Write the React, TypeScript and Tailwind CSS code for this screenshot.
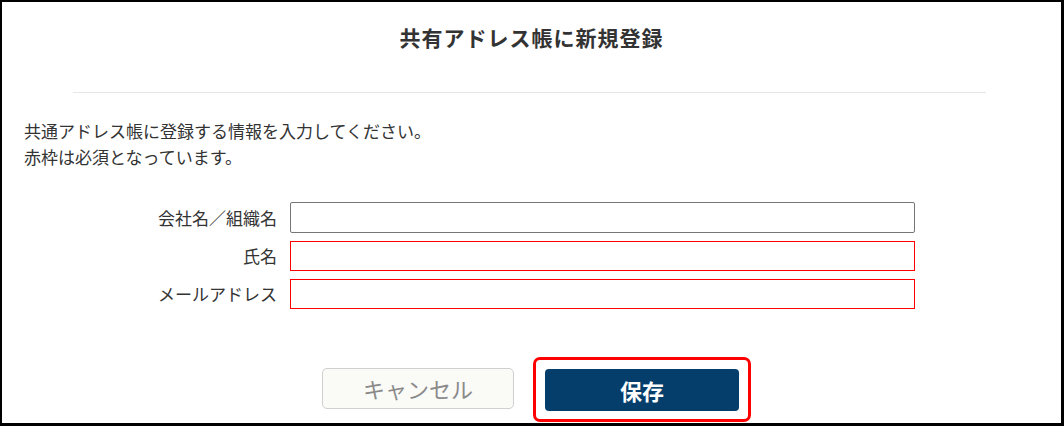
export default function App() {
  return (
    <div className="w-[1064px] h-[426px] overflow-hidden bg-white border-black border-t-2 border-l-2 border-r-[3px] border-b-[3px] text-[#333] font-['Noto_Sans_CJK_JP','Noto_Sans',sans-serif]">
      {/* Title */}
      <h1 className="pt-[20px] text-center text-[21px] leading-[30px] font-bold tracking-[1px]">
        共有アドレス帳に新規登録
      </h1>
      <div className="mt-[40px] ml-[71px] mr-[75px] h-px bg-[#e6e6e6]" />

      {/* Description */}
      <div className="mt-[25px] px-[22px] text-[17px] leading-[26px]">
        <p>共通アドレス帳に登録する情報を入力してください。</p>
        <p>赤枠は必須となっています。</p>
      </div>

      {/* Form */}
      <div className="mt-[32px] flex flex-col gap-[8px]">
        <div className="flex items-center">
          <label className="w-[275px] text-right text-[17px]">会社名／組織名</label>
          <input className="ml-[13px] w-[625px] h-[31px] border border-[#767676] rounded-[2px] px-2 outline-none" />
        </div>
        <div className="flex items-center">
          <label className="w-[275px] text-right text-[17px]">氏名</label>
          <input className="ml-[13px] w-[625px] h-[30px] border border-[#ff0000] px-2 outline-none" />
        </div>
        <div className="flex items-center">
          <label className="w-[275px] text-right text-[17px]">メールアドレス</label>
          <input className="ml-[13px] w-[625px] h-[30px] border border-[#ff0000] px-2 outline-none" />
        </div>
      </div>

      {/* Buttons */}
      <div className="mt-[59px] flex justify-center items-start gap-[31px] pr-[2px]">
        <button className="w-[192px] h-[41px] bg-[#fafaf7] border border-[#d0d0d0] rounded-[5px] text-[22px] text-[#8a8a8a]">
          キャンセル
        </button>
        <div className="relative mt-px">
          <button className="w-[194px] h-[42px] bg-[#053e6b] rounded-[4px] text-white text-[22px] font-bold">
            保存
          </button>
          <div className="absolute -left-[12px] -right-[12px] -top-[12px] -bottom-[11px] border-[3px] border-[#ff0000] rounded-[7px] pointer-events-none" />
        </div>
      </div>
    </div>
  )
}
